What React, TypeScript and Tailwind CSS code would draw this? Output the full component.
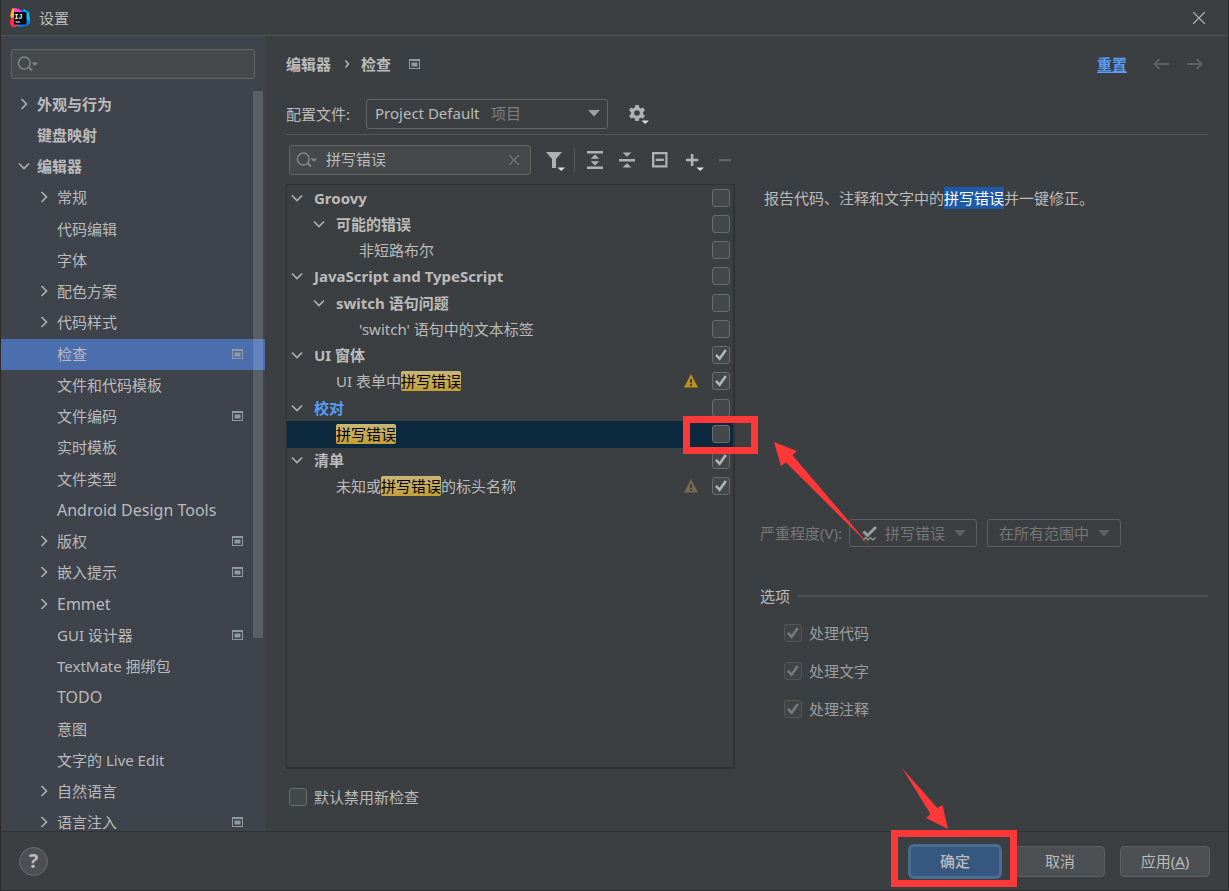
import { ReactNode, useState } from "react";
import clsx from "clsx";

type NavItem = {
  label: string;
  level?: number;
  state?: "open" | "closed";
  project?: boolean;
};

type Inspection = {
  label: ReactNode;
  name: string;
  level: number;
  group?: boolean;
  checked?: boolean;
  warning?: "strong" | "weak";
  modified?: boolean;
};

const navItems: NavItem[] = [
  { label: "外观与行为", level: 0, state: "closed" },
  { label: "键盘映射", level: 0 },
  { label: "编辑器", level: 0, state: "open" },
  { label: "常规", state: "closed" },
  { label: "代码编辑" },
  { label: "字体" },
  { label: "配色方案", state: "closed" },
  { label: "代码样式", state: "closed" },
  { label: "检查", project: true },
  { label: "文件和代码模板" },
  { label: "文件编码", project: true },
  { label: "实时模板" },
  { label: "文件类型" },
  { label: "Android Design Tools" },
  { label: "版权", state: "closed", project: true },
  { label: "嵌入提示", state: "closed", project: true },
  { label: "Emmet", state: "closed" },
  { label: "GUI 设计器", project: true },
  { label: "TextMate 捆绑包" },
  { label: "TODO" },
  { label: "意图" },
  { label: "文字的 Live Edit" },
  { label: "自然语言", state: "closed" },
  { label: "语言注入", state: "closed", project: true },
];

const Match = () => (
  <mark className="rounded-[3px] bg-linear-to-b from-[#c9b577] to-[#c3a034] text-black">
    拼写错误
  </mark>
);

const inspections: Inspection[] = [
  { name: "Groovy", label: "Groovy", level: 0, group: true },
  { name: "可能的错误", label: "可能的错误", level: 1, group: true },
  { name: "非短路布尔", label: "非短路布尔", level: 2 },
  {
    name: "JavaScript and TypeScript",
    label: "JavaScript and TypeScript",
    level: 0,
    group: true,
  },
  { name: "switch 语句问题", label: "switch 语句问题", level: 1, group: true },
  {
    name: "'switch' 语句中的文本标签",
    label: "'switch' 语句中的文本标签",
    level: 2,
  },
  { name: "UI 窗体", label: "UI 窗体", level: 0, group: true, checked: true },
  {
    name: "UI 表单中拼写错误",
    label: (
      <>
        UI 表单中
        <Match />
      </>
    ),
    level: 1,
    checked: true,
    warning: "strong",
  },
  { name: "校对", label: "校对", level: 0, group: true, modified: true },
  { name: "拼写错误", label: <Match />, level: 1 },
  { name: "清单", label: "清单", level: 0, group: true, checked: true },
  {
    name: "未知或拼写错误的标头名称",
    label: (
      <>
        未知或
        <Match />
        的标头名称
      </>
    ),
    level: 1,
    checked: true,
    warning: "weak",
  },
];

const indents = ["pl-1", "pl-[26px]", "pl-[49px]"];

const Chevron = ({ open }: { open: boolean }) => (
  <svg viewBox="0 0 12 12" className="size-3 shrink-0" fill="none" stroke="#afb1b3" strokeWidth="1.6">
    <path d={open ? "M1 3.5l5 5 5-5" : "M3.5 1l5 5-5 5"} />
  </svg>
);

const ProjectIcon = () => (
  <svg viewBox="0 0 11 10" className="h-2.5 w-[11px] shrink-0">
    <path d="M0 0h11v10H0zM1 2v7h9V2z" fill="#8f9ba3" fillRule="evenodd" />
    <rect x="2.500" y="3.500" width="6" height="4" fill="#8f9ba3" />
  </svg>
);

const SearchIcon = () => (
  <svg viewBox="0 0 22 18" className="h-[18px] w-[22px] shrink-0" fill="none" stroke="#7d868b">
    <circle cx="7.300" cy="8" r="5.900" strokeWidth="1.500" />
    <path d="M11.500 12l3.500 3.500" strokeWidth="2" />
    <path d="M14.500 7.500h6.500l-3.200 3.500z" fill="#7d868b" stroke="none" />
  </svg>
);

const WarningIcon = ({ weak }: { weak: boolean }) => (
  <svg viewBox="0 0 14 14" className="size-3.5 shrink-0">
    <path d="M7 0l7 13.500H0z" fill={weak ? "#766b4f" : "#be9117"} />
    <path d="M6 5h2v4H6zM6 10h2v2H6z" fill="#3c3f41" />
  </svg>
);

const DropArrow = ({ dim = false }: { dim?: boolean }) => (
  <svg viewBox="0 0 12 7" className="h-[7px] w-3 shrink-0">
    <path d="M0 0h12L6 6.500z" fill={dim ? "#5f6264" : "#9da0a2"} />
  </svg>
);

type CheckboxProps = {
  label?: string;
  checked?: boolean;
  disabled?: boolean;
};

const Checkbox = ({ label, checked = false, disabled = false }: CheckboxProps) => (
  <span className={clsx("grid size-[18px] shrink-0", disabled && "opacity-50")}>
    <input
      type="checkbox"
      aria-label={label}
      defaultChecked={checked}
      disabled={disabled}
      className="peer size-[18px] appearance-none rounded-[3px] border border-[#6b6b6b] bg-[#43494a] [grid-area:1/1]"
    />
    <svg
      viewBox="0 0 18 18"
      className="pointer-events-none invisible size-[18px] [grid-area:1/1] peer-checked:visible"
      fill="none"
      stroke="#b4b6b8"
      strokeWidth="2.500"
    >
      <path d="M4 8.800l3.600 4L13.800 4" />
    </svg>
  </span>
);

const ToolButton = ({ label, dim, children }: { label: string; dim?: boolean; children: ReactNode }) => (
  <button type="button" aria-label={label} className="size-8 shrink-0">
    <svg viewBox="0 0 32 32" className="size-8" fill={dim ? "#616466" : "#afb1b3"}>
      {children}
    </svg>
  </button>
);

const Logo = () => (
  <svg viewBox="0 0 20 20" className="size-5">
    <path d="M2 0l6 1-2 8 4 8-5 2-4-3 1-5-2-3z" fill="#fc801d" />
    <path d="M0 12l4-3 6 5-3 4-5 1-2-3z" fill="#fe2857" />
    <path d="M1 5l2-4 4 1-2 6-4 2z" fill="#fdb62b" />
    <path d="M4 0l5 1 4 3H4z" fill="#ff45c8" />
    <path d="M11 3l3-2 5 3 1 12-4 2-8 1v-4l6-6z" fill="#087cfa" />
    <path d="M14 1l5 4 1 9-4-4z" fill="#07c3f2" />
    <rect x="4" y="4" width="12.500" height="12.500" fill="#0a0a0a" />
    <text x="4.500" y="10.500" fontSize="6.500" fontWeight="700" fontFamily="Liberation Mono, monospace" fill="#fff">
      IJ
    </text>
    <rect x="5.500" y="13.500" width="4.500" height="1" fill="#fff" />
  </svg>
);

const Sidebar = () => {
  const [selected, setSelected] = useState("检查");
  return (
    <aside className="relative flex w-[264px] shrink-0 flex-col overflow-hidden bg-[#3e434c]">
      <label className="mx-2.5 mt-[13px] flex h-[30px] w-[244px] shrink-0 items-center rounded-[3px] border border-[#646464] bg-[#45494a] pl-[5px]">
        <SearchIcon />
        <input type="search" aria-label="搜索" className="min-w-0 flex-1 bg-transparent outline-none" />
      </label>
      <div className="mt-2.5 min-h-0 flex-1 overflow-hidden">
        <ul className="grid h-[750px] auto-rows-fr">
          {navItems.map(({ label, level = 1, state, project }) => (
            <li key={label} className={clsx("flex", label === selected && "bg-[#4b6eaf]")}>
              <button
                type="button"
                onClick={() => setSelected(label)}
                className={clsx(
                  "flex flex-1 items-center pr-[22px] pb-0.5 text-left",
                  level === 0 ? "pl-[17px] font-bold" : "pl-[37px]",
                  /^[A-Za-z ]+$/.test(label) && "text-base leading-5",
                )}
              >
                <span className="flex w-[19px] shrink-0">
                  {state && <Chevron open={state === "open"} />}
                </span>
                <span className="flex-1">{label}</span>
                {project && <ProjectIcon />}
              </button>
            </li>
          ))}
        </ul>
      </div>
      <div className="absolute top-[55px] right-0.5 h-[547px] w-2.5 bg-white/15" />
    </aside>
  );
};

const Toolbar = () => (
  <div className="mt-2.5 flex h-[30px] items-center pl-[3px]">
    <label className="flex h-[30px] w-[242px] items-center rounded-[3px] border border-[#646464] bg-[#45494a] pl-1.5">
      <SearchIcon />
      <input
        type="text"
        aria-label="搜索检查"
        defaultValue="拼写错误"
        className="ml-2 min-w-0 flex-1 bg-transparent pb-0.5 outline-none"
      />
      <svg viewBox="0 0 10 10" className="mr-[11px] size-2.5" stroke="#7a7d7f" strokeWidth="1.100">
        <path d="M0 0l10 10M10 0L0 10" />
      </svg>
    </label>
    <div className="ml-2 flex items-center">
      <ToolButton label="筛选">
        <path d="M7 8h16l-6 7v9h-4v-9z" />
        <path d="M18.500 23.500H26L22.200 27z" fill="#dfe1e3" />
      </ToolButton>
      <div className="mr-1 ml-[3px] h-6 w-px bg-[#55585a]" />
      <ToolButton label="全部展开">
        <path d="M8 7h16v2.400H8zM8 22.600h16V25H8zM16 10.500l4.400 4.200h-8.800zM16 21.500l4.400-4.200h-8.800z" />
      </ToolButton>
      <ToolButton label="全部折叠">
        <path d="M8 15h16v2.400H8zM16 12.800l4.400-4.300h-8.800zM16 19.300l4.400 4.300h-8.800z" />
      </ToolButton>
      <ToolButton label="重置为空">
        <path d="M9 8h15.500v15.500H9zM11.300 10.300v11h11v-11z" fillRule="evenodd" />
        <path d="M12.700 14.700h8.200v2.300h-8.200z" />
      </ToolButton>
      <ToolButton label="添加">
        <path d="M11 14.700h4.800V10h2.600v4.700h4.800v2.500h-4.800V22h-2.600v-4.800H11z" />
        <path d="M21.500 23.500H29L25.200 27z" fill="#dfe1e3" />
      </ToolButton>
      <ToolButton label="移除" dim>
        <path d="M12 15h12v2.300H12z" />
      </ToolButton>
    </div>
  </div>
);

const InspectionTree = () => (
  <div className="min-h-0 flex-1 border border-r-2 border-b-2 border-[#323232]">
    <ul className="grid h-[315px] auto-rows-fr">
      {inspections.map(({ name, label, level, group, checked, warning, modified }) => {
        const selected = name === "拼写错误";
        return (
          <li
            key={name}
            className={clsx(
              "relative flex items-center pr-[3px] pb-px",
              indents[level],
              selected && "bg-[#0d293e]",
            )}
          >
            <span className="flex w-[23px] shrink-0">{group && <Chevron open />}</span>
            <span className={clsx("flex-1", group && "font-bold", modified && "text-[#589df6]")}>
              {label}
            </span>
            {warning && (
              <span className="mr-3.5">
                <WarningIcon weak={warning === "weak"} />
              </span>
            )}
            <Checkbox label={name} checked={checked} />
            {selected && (
              <>
                <div className="pointer-events-none absolute -top-[5px] -right-[25px] z-10 h-[38px] w-[75px] border-7 border-[#fd3838]" />
                <svg
                  viewBox="0 0 96 104"
                  className="pointer-events-none absolute top-[21px] left-full z-10 ml-[41px] h-[104px] w-24"
                  fill="#fd3838"
                >
                  <path d="M0 0l23 9-4.500 4.300L95.500 103.500 12 20.500 7 24z" />
                </svg>
              </>
            )}
          </li>
        );
      })}
    </ul>
  </div>
);

const Details = () => (
  <section className="flex min-w-0 flex-1 flex-col pl-[25px]">
    <p className="flex-1 pt-0.5 pl-1 leading-6">
      报告代码、注释和文字中的
      <span className="bg-[#1e5aa8] py-px text-white">拼写错误</span>
      并一键修正。
    </p>
    <div className="flex h-7 items-center text-[#777777]">
      <label htmlFor="severity" className="mr-[7px] whitespace-nowrap">
        严重程度(V):
      </label>
      <div className="grid w-[128px] items-center">
        <select
          id="severity"
          disabled
          className="h-7 w-full appearance-none rounded-[3px] border border-[#5e6060] pl-[35px] opacity-100 [grid-area:1/1]"
        >
          <option>拼写错误</option>
        </select>
        <div className="pointer-events-none flex items-center justify-between pr-[11px] pl-[13px] [grid-area:1/1]">
          <svg viewBox="0 0 16 16" className="size-4" fill="none" stroke="#9a9c9e">
            <path d="M1.500 6.500l4 4L14 2" strokeWidth="3" />
            <path d="M1 15l2.500-2.500L6 15l2.500-2.500L11 15l2.500-2.500" strokeWidth="1.200" />
          </svg>
          <DropArrow dim />
        </div>
      </div>
      <div className="ml-2.5 grid w-[134px] items-center">
        <select
          aria-label="范围"
          disabled
          className="h-7 w-full appearance-none rounded-[3px] border border-[#5e6060] pl-[11px] opacity-100 [grid-area:1/1]"
        >
          <option>在所有范围中</option>
        </select>
        <div className="pointer-events-none flex justify-end pr-[11px] [grid-area:1/1]">
          <DropArrow dim />
        </div>
      </div>
    </div>
    <fieldset className="mt-[39px] mb-10">
      <div className="flex h-5 items-center gap-[7px]">
        <span>选项</span>
        <div className="h-0.5 flex-1 bg-[#515151]" />
      </div>
      <div className="mt-2 flex flex-col pl-6 text-[#9b9d9e]">
        {["处理代码", "处理文字", "处理注释"].map((option) => (
          <label key={option} className="flex h-[38px] items-center gap-[7px]">
            <Checkbox checked disabled />
            {option}
          </label>
        ))}
      </div>
    </fieldset>
  </section>
);

const NavArrow = ({ label, d }: { label: string; d: string }) => (
  <button type="button" aria-label={label} disabled>
    <svg viewBox="0 0 16 12" className="h-3 w-4" fill="none" stroke="#5e6163" strokeWidth="2">
      <path d={d} />
    </svg>
  </button>
);

const Main = () => (
  <main className="flex min-w-0 flex-1 flex-col pr-5 pl-[21px]">
    <header className="mt-[13px] flex h-[30px] shrink-0 items-center">
      <h1 className="flex items-center font-bold">
        <span>编辑器</span>
        <svg viewBox="0 0 6 8" className="mr-[11px] ml-[13px] h-2 w-1.5" fill="none" stroke="#bbbbbb" strokeWidth="1.400">
          <path d="M1.500 0.500L4.500 4l-3 3.500" />
        </svg>
        <span className="mr-[18px]">检查</span>
        <ProjectIcon />
      </h1>
      <a href="#reset" className="mr-[26px] ml-auto font-bold text-[#589df6] underline underline-offset-2">
        重置
      </a>
      <div className="mr-[5px] flex items-center gap-[18px]">
        <NavArrow label="后退" d="M16 6H1.500M6.500 1l-5 5 5 5" />
        <NavArrow label="前进" d="M0 6h14.500M9.500 1l5 5-5 5" />
      </div>
    </header>
    <div className="mt-5 flex shrink-0 items-center border-b border-[#555555] pb-[5px]">
      <label htmlFor="profile" className="w-20">
        配置文件:
      </label>
      <div className="grid w-[242px] items-center">
        <select
          id="profile"
          className="h-[30px] w-full appearance-none rounded-[3px] border border-[#646464] bg-[#3c3f41] pb-0.5 pl-2 [grid-area:1/1]"
        >
          <option>Project Default</option>
        </select>
        <div className="pointer-events-none flex items-center justify-between pr-2 pb-0.5 pl-[125px] text-[#808080] [grid-area:1/1]">
          <span>项目</span>
          <DropArrow />
        </div>
      </div>
      <button type="button" aria-label="配置文件操作" className="mt-0.5 ml-[21px]">
        <svg viewBox="0 0 20 20" className="size-5" fill="#afb1b3">
          <path
            fillRule="evenodd"
            d="M6.300 0h3.400l.5 2.500 1.600.9 2.400-.8 1.700 2.900-1.900 1.700v1.700l1.900 1.700-1.700 2.900-2.400-.8-1.600.9-.5 2.400H6.300l-.5-2.400-1.600-.9-2.400.8L.1 10.600 2 8.900V7.200L.1 5.500l1.700-2.900 2.400.8 1.600-.9zM8 5.200a2.800 2.800 0 100 5.600 2.800 2.800 0 000-5.600z"
          />
          <path d="M12.500 15.500H20L16.200 19z" fill="#dfe1e3" />
        </svg>
      </button>
    </div>
    <div className="flex min-h-0 flex-1">
      <div className="flex w-[449px] shrink-0 flex-col">
        <Toolbar />
        <div className="mt-[9px] flex min-h-0 flex-1 flex-col">
          <InspectionTree />
        </div>
        <label className="mt-[18px] mb-6 flex h-5 items-center gap-[7px] pl-[3px]">
          <Checkbox />
          默认禁用新检查
        </label>
      </div>
      <div className="flex min-w-0 flex-1 pt-[49px] pb-[63px]">
        <Details />
      </div>
    </div>
  </main>
);

const buttonClass = "h-[31px] w-[90px] rounded-[4px] border border-[#5e6060] bg-[#4c5052]";

const Footer = () => (
  <footer className="flex h-[59px] shrink-0 items-center justify-between border-t border-[#323232] pr-[18px] pl-[18px]">
    <button
      type="button"
      className="size-[29px] rounded-full border border-[#6a6d6f] bg-[#4c5052] text-xl leading-none font-bold"
    >
      ?
    </button>
    <div className="flex gap-[15px]">
      <div className="relative flex">
        <button
          type="submit"
          className="h-[31px] w-[90px] rounded-[4px] border border-[#4c708c] bg-[#365880] font-medium ring-2 ring-[#466d94]"
        >
          确定
        </button>
        <div className="pointer-events-none absolute -top-4 -left-[19px] z-10 h-[57px] w-[126px] border-7 border-[#fd3838]" />
        <svg
          viewBox="0 0 46 61"
          className="pointer-events-none absolute bottom-full -left-2 z-10 mb-[17px] h-[61px] w-[46px]"
          fill="#fd3838"
        >
          <path d="M0 0l35.500 40 5-3L46 61 24 50l4.500-4z" />
        </svg>
      </div>
      <button type="button" className={buttonClass}>
        取消
      </button>
      <button type="button" className={buttonClass}>
        应用(<u>A</u>)
      </button>
    </div>
  </footer>
);

const App = () => {
  return (
    <div className="flex h-screen flex-col overflow-hidden border-x border-b border-[#2b2b2b] bg-[#3c3f41] font-['Noto_Sans','Noto_Sans_CJK_SC',sans-serif] text-[15px] leading-5 text-[#bbbbbb]">
      <div className="flex h-9 shrink-0 items-center border-b border-[#505355] pr-[23px] pl-[9px]">
        <Logo />
        <span className="ml-[9px] flex-1">设置</span>
        <button type="button" aria-label="关闭">
          <svg viewBox="0 0 12 12" className="size-3" stroke="#bbbbbb" strokeWidth="1.200">
            <path d="M0 0l12 12M12 0L0 12" />
          </svg>
        </button>
      </div>
      <div className="flex min-h-0 flex-1">
        <Sidebar />
        <Main />
      </div>
      <Footer />
    </div>
  );
};

export default App;
